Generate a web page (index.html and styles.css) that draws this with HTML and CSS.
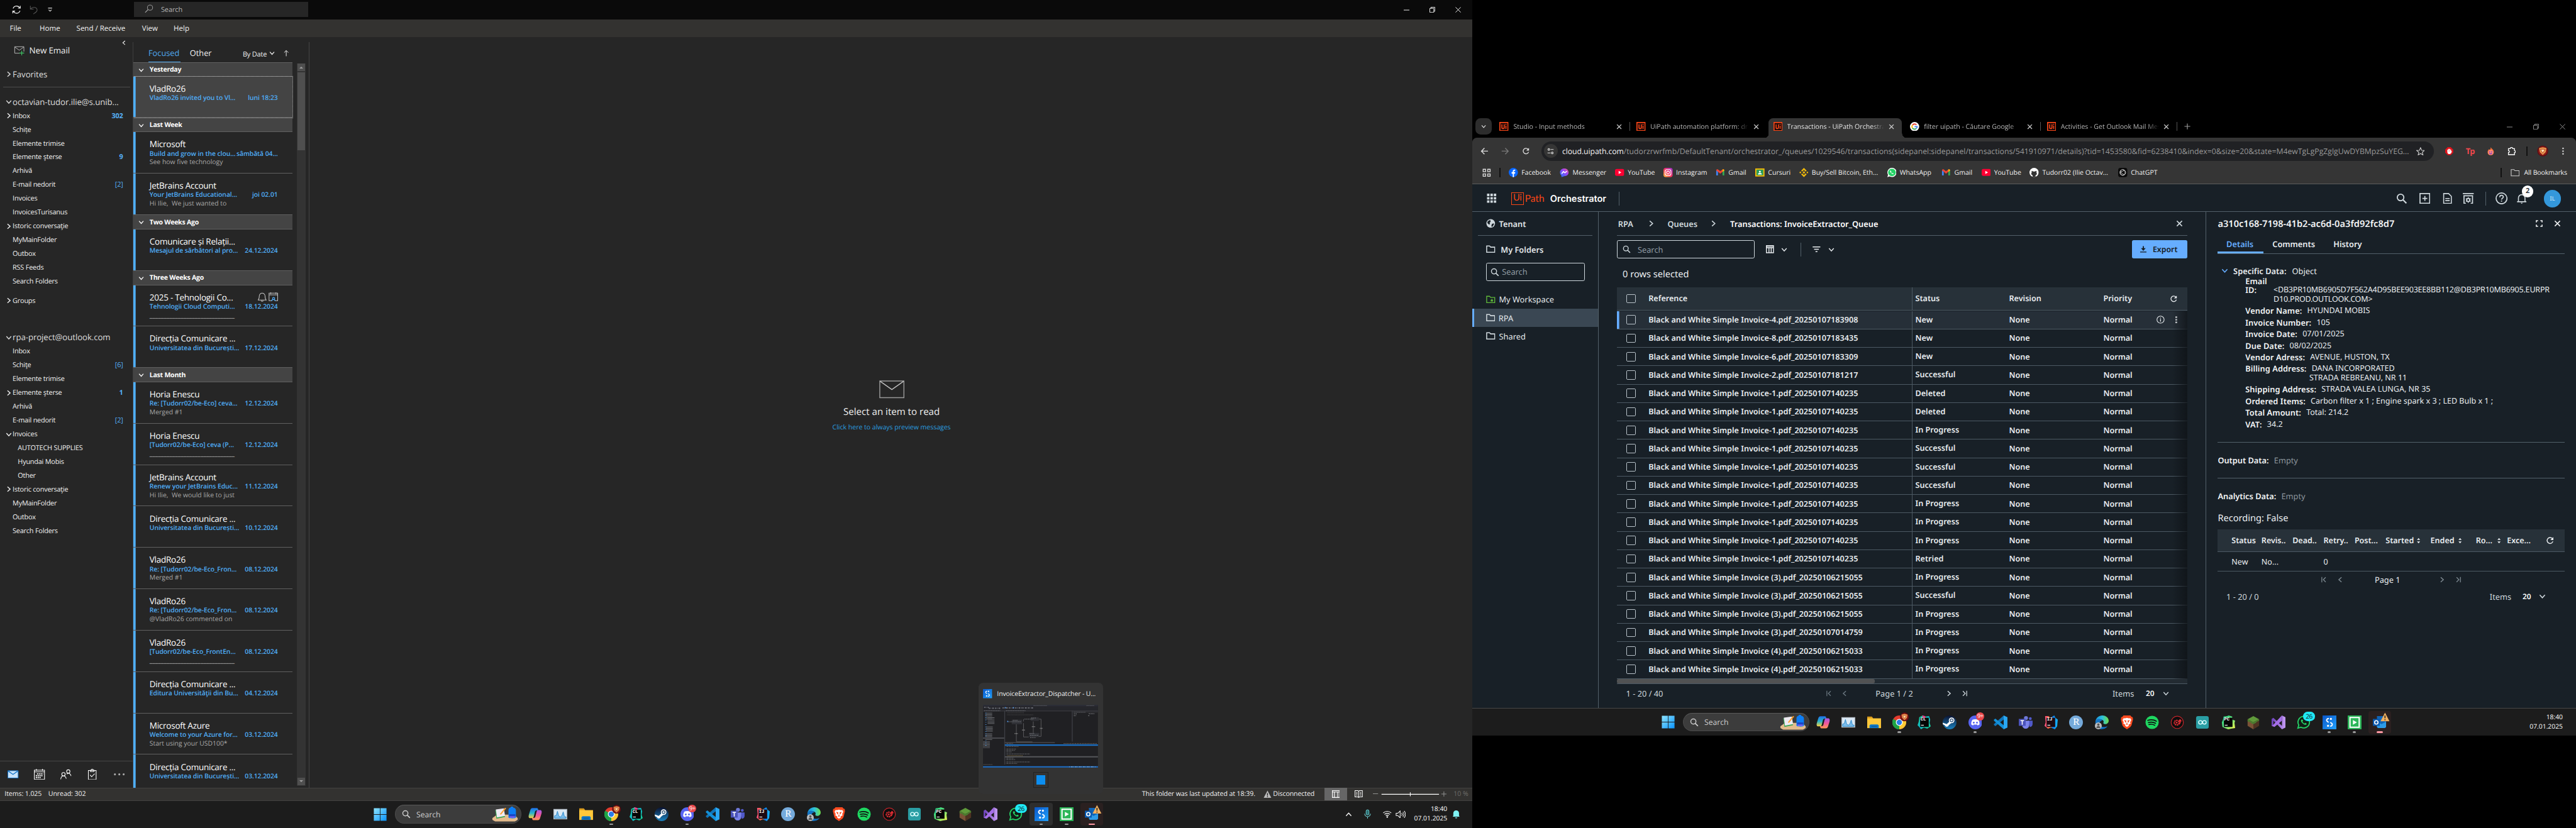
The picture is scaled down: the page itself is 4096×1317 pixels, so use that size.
FILE: index.html
```html
<!DOCTYPE html>
<html lang="en">
<head>
<meta charset="utf-8">
<title>Desktop</title>
<link rel="stylesheet" href="styles.css">
</head>
<body>
<svg class="sprite" aria-hidden="true">
  <defs>
    <linearGradient id="g-win" x1="0" y1="0" x2="1" y2="1"><stop offset="0" stop-color="#8ee4ff"/><stop offset="1" stop-color="#0a93fb"/></linearGradient>
    <linearGradient id="g-cop1" x1="0" y1="0" x2="0" y2="1"><stop offset="0" stop-color="#1f6fe8"/><stop offset=".5" stop-color="#2ab5c9"/><stop offset="1" stop-color="#ffd23c"/></linearGradient>
    <linearGradient id="g-cop2" x1="0" y1="0" x2="0" y2="1"><stop offset="0" stop-color="#a25be8"/><stop offset=".5" stop-color="#f0569a"/><stop offset="1" stop-color="#ff9a55"/></linearGradient>
    <linearGradient id="g-steam" x1="0" y1="0" x2="0" y2="1"><stop offset="0" stop-color="#0b1230"/><stop offset="1" stop-color="#1b83c0"/></linearGradient>
    <linearGradient id="g-ij" x1="0" y1="0" x2="1" y2="0"><stop offset="0" stop-color="#fe4c88"/><stop offset=".45" stop-color="#f97a2c"/><stop offset=".6" stop-color="#0a7cf0"/><stop offset="1" stop-color="#17b7f5"/></linearGradient>
    <linearGradient id="g-pc" x1="0" y1="0" x2="1" y2="1"><stop offset="0" stop-color="#1fd789"/><stop offset=".5" stop-color="#5fe07a"/><stop offset="1" stop-color="#fcf84a"/></linearGradient>
    <linearGradient id="g-cl" x1="0" y1="0" x2="1" y2="1"><stop offset="0" stop-color="#22d88f"/><stop offset=".5" stop-color="#0fb5c8"/><stop offset="1" stop-color="#18d68b"/></linearGradient>
    <linearGradient id="g-edge" x1="0" y1="0" x2="1" y2="0"><stop offset="0" stop-color="#1c8fd8"/><stop offset=".5" stop-color="#2cc0df"/><stop offset="1" stop-color="#6fe04a"/></linearGradient>
    <linearGradient id="g-ui" x1="0" y1="0" x2="1" y2="1"><stop offset="0" stop-color="#0a56c8"/><stop offset="1" stop-color="#22a3ff"/></linearGradient>
    <linearGradient id="g-ig" x1="0" y1="1" x2="1" y2="0"><stop offset="0" stop-color="#ffc53d"/><stop offset=".45" stop-color="#f9325b"/><stop offset="1" stop-color="#9b32d6"/></linearGradient>
    <linearGradient id="g-msg" x1="0" y1="1" x2="1" y2="0"><stop offset="0" stop-color="#1a77ff"/><stop offset=".6" stop-color="#9a45f5"/><stop offset="1" stop-color="#ff5f86"/></linearGradient>
    <linearGradient id="g-vs" x1="0" y1="0" x2="1" y2="0"><stop offset="0" stop-color="#6a3fb8"/><stop offset="1" stop-color="#c79cf5"/></linearGradient>
  </defs>
  <symbol id="i-chev-d" viewBox="0 0 12 12"><path d="M1.5 3.5 6 8.5l4.500-5" fill="none" stroke="currentColor" stroke-width="1.700"/></symbol>
  <symbol id="i-chev-r" viewBox="0 0 12 12"><path d="M3.500 1.500 8.500 6l-5 4.500" fill="none" stroke="currentColor" stroke-width="1.700"/></symbol>
  <symbol id="i-chev-l" viewBox="0 0 12 12"><path d="M8.500 1.500 3.500 6l5 4.500" fill="none" stroke="currentColor" stroke-width="1.700"/></symbol>
  <symbol id="i-first" viewBox="0 0 12 12"><path d="M9.500 1.500 5 6l4.500 4.500M2.200 1v10" fill="none" stroke="currentColor" stroke-width="1.500"/></symbol>
  <symbol id="i-last" viewBox="0 0 12 12"><path d="M2.500 1.500 7 6l-4.500 4.500M9.800 1v10" fill="none" stroke="currentColor" stroke-width="1.500"/></symbol>
  <symbol id="i-x" viewBox="0 0 12 12"><path d="M1.500 1.500l9 9M10.500 1.500l-9 9" fill="none" stroke="currentColor" stroke-width="1.700"/></symbol>
  <symbol id="i-search" viewBox="0 0 16 16"><circle cx="6.500" cy="6.500" r="4.800" fill="none" stroke="currentColor" stroke-width="1.700"/><path d="M10 10l5 5" stroke="currentColor" stroke-width="2"/></symbol>
  <symbol id="i-search-ol" viewBox="0 0 16 16"><circle cx="10" cy="6" r="4.800" fill="none" stroke="currentColor"/><path d="M6.500 9.500 1 15" stroke="currentColor" stroke-width="1.200"/></symbol>
  <symbol id="i-reload" viewBox="0 0 16 16"><path d="M13.200 9.500A5.500 5.500 0 1 1 12 4.100L13.500 6" fill="none" stroke="currentColor" stroke-width="1.700"/><path d="M14 1.500V7H8.500z" fill="currentColor"/></symbol>
  <symbol id="i-folder" viewBox="0 0 16 16"><path d="M1 2.500h5l2 2h7v9H1z" fill="none" stroke="currentColor" stroke-width="1.700"/></symbol>
  <symbol id="i-uip" viewBox="0 0 16 16"><path fill="#fa4616" d="M0 0h16v16H0z"/><path fill="#14080a" d="M1.800 1.800h12.400v12.400H1.800z"/><path d="M4.500 4v5.500a2 2 0 0 0 4 0V4" fill="none" stroke="#fa4616" stroke-width="1.700"/><path d="M11.500 6.500V12M11.500 3.500v1.700" stroke="#fa4616" stroke-width="1.700"/></symbol>
  <symbol id="i-yt" viewBox="0 0 16 16"><rect y="2" width="16" height="12" rx="3" fill="#ff0033"/><path d="M6.300 5.300v5.400L11 8z" fill="#fff"/></symbol>
  <symbol id="i-gmail" viewBox="0 0 16 16"><path fill="#4285f4" d="M1 13V4l3 2.300V13z"/><path fill="#34a853" d="M15 13V4l-3 2.300V13z"/><path fill="#ea4335" d="M1 4.500C1 2.500 3 2 4.300 3L8 5.800 11.700 3c1.300-1 3.300-.5 3.300 1.500L8 10z"/><path fill="#fbbc04" d="M12 3v4l3-2.300c0-2-2-2.700-3-1.700z"/></symbol>
  <symbol id="i-wa" viewBox="0 0 24 24"><path d="M2 22l1.500-5.300A10 10 0 1 1 7.400 20.500z" fill="#111d16" stroke="#25d366" stroke-width="2"/><path d="M8 7c-1.500 1.500-.5 4 1.800 6.300S15 17 16.500 15.800c.8-.7.8-1.600.3-1.900l-2-1-1.300 1.300c-1.500-.5-3.200-2.200-3.700-3.700L11 9.200 10 7z" fill="#25d366"/></symbol>
  <symbol id="i-sort" viewBox="0 0 8 14"><path d="M1 5.500 4 2l3 3.500zM1 8.500 4 12l3-3.500z" fill="currentColor"/></symbol>
  <symbol id="i-github" viewBox="0 0 16 16"><circle cx="8" cy="8" r="8" fill="#fff"/><path d="M5.500 16v-3.200C2.500 12.500 2.800 9 4 8c-.5-1-.3-2.300 0-2.700.8 0 1.500.4 2.200.9h3.600c.7-.5 1.400-.9 2.200-.9.300.4.500 1.700 0 2.700 1.200 1 1.500 4.500-1.500 4.800V16z" fill="#353535"/></symbol>

  <symbol id="t-win" viewBox="0 0 24 24"><path d="M.5.500h11v11H.5zM12.500.5h11v11h-11zM.5 12.500h11v11H.5zM12.500 12.500h11v11h-11z" fill="url(#g-win)"/></symbol>
  <symbol id="t-desk" viewBox="0 0 46 26"><path d="M1 20l8-6h30l6 6v3l-5 3H6l-5-3z" fill="#e3bb8c"/><path d="M6 6l15-2 2 14L8 21z" fill="#3aa655"/><path d="M7 5l14-2 2 13L9 19z" fill="#eeeaf2"/><path d="M14 13 23 2l2 1-9 11z" fill="#ffa02e"/><path d="M29 7c0-4 2-5 3-5s0-2 3-2 2 2 3 2 4 1 4 5v12c0 2-13 2-13 0z" fill="#0c7df5"/><path d="M30 13h11v4H30z" fill="#1a47c8"/><path d="M31 18h9" stroke="#b14ff2" stroke-width="1.500"/></symbol>
  <symbol id="t-copilot" viewBox="0 0 24 24"><path d="M7.500 1.500H15c2 0 2 2 2.500 4h-3c-2 0-2.500 1-3 3l-2 8c-.5 2-1.500 2.500-3.500 2.500H3.500C.5 19 .2 16 1 13l2.500-8c.6-2 1.500-3.500 4-3.500z" fill="url(#g-cop1)"/><path d="M16.500 22.500H9c-2 0-2-2-2.500-4h3c2 0 2.500-1 3-3l2-8c.5-2 1.500-2.500 3.500-2.500h2.500c3 0 3.300 3 2.500 6l-2.500 8c-.6 2-1.500 3.500-4 3.500z" fill="url(#g-cop2)"/></symbol>
  <symbol id="t-mon" viewBox="0 0 24 24"><path d="M0 3h24v18H0z" fill="#b7bfc7"/><path d="M1.500 4.500h21v15h-21z" fill="#dbe9f5"/><path d="M2 19v-4l3-1 2-7 2 8 3 2 3-3 2-6 2 8 3 1v2z" fill="#7cbdec" stroke="#2484c8"/></symbol>
  <symbol id="t-files" viewBox="0 0 24 24"><path d="M0 2h8l2 2.500V8H0z" fill="#d99a1c"/><path d="M0 5h24v17H0z" fill="#ffc83a"/><path d="M4 22v-4c0-1.500 1-2.500 2.500-2.500h11c1.500 0 2.500 1 2.500 2.500v4z" fill="#0f78c8"/><path d="M7 19h10" stroke="#0a5a9c" stroke-width="1.500"/></symbol>
  <symbol id="t-chrome" viewBox="0 0 24 24"><circle cx="12" cy="12" r="12" fill="#e33b2e"/><path d="M12 12 1.600 6A12 12 0 0 0 12 24z" fill="#1ea446"/><path d="M12 12 12 24A12 12 0 0 0 22.500 6.200L12 6.500z" fill="#fcc934"/><path d="M1.600 6 7 15l5 9A12 12 0 0 1 1.600 6z" fill="#1ea446"/><circle cx="12" cy="12" r="6" fill="#fff"/><circle cx="12" cy="12" r="4.600" fill="#2b7de9"/></symbol>
  <symbol id="t-shield" viewBox="0 0 20 20"><circle cx="10" cy="10" r="9.500" fill="#5c0d12"/><circle cx="10" cy="10" r="8" fill="#8c1a18"/><path d="M3.500 5 10 3.500 16.500 5 15 12l-5 5-5-5z" fill="#e89a50"/><path d="M6 7h8l-4 7z" fill="#ffe3b0" stroke="#b33a20"/></symbol>
  <symbol id="t-clion" viewBox="0 0 24 24"><path d="M3 3l6-3 4 2 7-1 2 6-1 6 2 6-6 4-6-2-5 3-3-4-3-3 2-6z" fill="url(#g-cl)"/><path d="M8 0l5 1 2 3-5 2z" fill="#f53b8b"/><path d="M4.500 4h15v16h-15z" fill="#050505"/><path d="M6 17h5" stroke="#ddd" stroke-width="1.500"/></symbol>
  <symbol id="t-steam" viewBox="0 0 24 24"><circle cx="12" cy="12" r="12" fill="url(#g-steam)"/><circle cx="15.500" cy="8.500" r="4" fill="none" stroke="#fff" stroke-width="1.800"/><circle cx="15.500" cy="8.500" r="2" fill="#dfe8f0"/><path d="M0 12.500l7 2.500 5-4.500 3 2.500-4.500 4a3.500 3.500 0 0 1-6.800 0L.5 15.500z" fill="#fff"/></symbol>
  <symbol id="t-discord" viewBox="0 0 24 24"><circle cx="12" cy="12" r="12" fill="#5865f2"/><path d="M7 7.500c3-1.300 7-1.300 10 0 1.700 2.500 2.400 5 2.200 8-1 .9-2.300 1.400-3.500 1.600l-.9-1.500c-2 .5-3.600.5-5.600 0l-.9 1.500c-1.200-.2-2.500-.7-3.500-1.600-.2-3 .5-5.500 2.200-8z" fill="#fff"/><circle cx="9.200" cy="12.500" r="1.600" fill="#5865f2"/><circle cx="14.800" cy="12.500" r="1.600" fill="#5865f2"/></symbol>
  <symbol id="t-code" viewBox="0 0 24 24"><path d="M17.500 0 24 3v18l-6.500 3z" fill="#2aa7f2"/><path d="M17.500 0v7L3 18.500.5 16.500V15z" fill="#0f75ba"/><path d="M17.500 24v-7L3 5.500.5 7.500V9z" fill="#1390d8"/></symbol>
  <symbol id="t-teams" viewBox="0 0 24 24"><circle cx="12.500" cy="4.500" r="3.500" fill="#6e78d8"/><circle cx="20" cy="5.500" r="2.500" fill="#5059c9"/><path d="M16 9h8v6c0 3-2 5-5 5z" fill="#5059c9"/><path d="M6 9h12v8c0 4-3 6-6 6s-6-2-6-6z" fill="#7b83eb"/><path d="M0 6h12v12H0z" fill="#4b53bc"/><path d="M3 9h6M6 9v7" stroke="#fff" stroke-width="1.700"/></symbol>
  <symbol id="t-idea" viewBox="0 0 24 24"><path d="M2 1l6 0 3 3 7-4 2 4 4 3-1 12-4 5-7-3-5 2-6-5 2-6z" fill="url(#g-ij)"/><path d="M4.500 4h15v16h-15z" fill="#1d0a12"/><path d="M6 17h5" stroke="#ddd" stroke-width="1.500"/></symbol>
  <symbol id="t-r" viewBox="0 0 24 24"><circle cx="12" cy="12" r="12" fill="#75aadb"/></symbol>
  <symbol id="t-edge" viewBox="0 0 24 24"><path d="M1 10C2 4 7 0 13 0c7 0 11 5 11 9s-3 6-6 6c-2 0-4-1-3-3s-1-5-5-5c-5 0-8 3-8 7z" fill="url(#g-edge)"/><path d="M1 10c3-5 9-5 12-1-3 0-5 2-5 5 0 5 6 8 14 5-3 4-7 5-11 5C4 23 0 17 1 10z" fill="#1273c4"/><circle cx="6" cy="18" r="6" fill="#b9bcc0"/><circle cx="6" cy="16" r="2" fill="#555"/><path d="M2.500 22c0-5 7-5 7 0z" fill="#555"/></symbol>
  <symbol id="t-brave" viewBox="0 0 24 24"><path d="M6 0h12l2 2.500 2 .5.500 4L20 17l-2 3-6 4-6-4-2-3L1.500 7 2 3l2-.5z" fill="#fb4b20"/><path d="M12 4l3 1h3l1.500 3-2 4 1 2-4 2 1 1.500L12 20l-3.500-2.500 1-1.500-4-2 1-2-2-4L6 5h3z" fill="#fff"/><path d="M7 8l4 1-1 4zM17 8l-4 1 1 4zM12 12l1.500 4h-3z" fill="#fb4b20"/></symbol>
  <symbol id="t-spotify" viewBox="0 0 24 24"><circle cx="12" cy="12" r="11.500" fill="#1ed760"/><path d="M4.500 8.500c5-1.500 11-1 15 1.500M5.500 12.300c4-1.200 9-.8 12.500 1.300M6.500 15.800c3.500-.9 7-.5 10 1.200" fill="none" stroke="#101010" stroke-width="1.900" stroke-linecap="round"/></symbol>
  <symbol id="t-red" viewBox="0 0 24 24"><circle cx="12" cy="12" r="10.700" fill="#0d0d0d" stroke="#c2252b" stroke-width="1.300"/><circle cx="11" cy="12.500" r="4" fill="none" stroke="#e12d33" stroke-width="2.500" stroke-dasharray="2.500 1"/><circle cx="11" cy="12.500" r="1.500" fill="#e12d33"/><path d="M14 9l3-3 3 4-2 .5c0 3-1 5-4 6 2-3 2-4 1.500-6z" fill="#e12d33"/></symbol>
  <symbol id="t-ard" viewBox="0 0 24 24"><rect x="1" y="1" width="22" height="22" rx="3.500" fill="#2a9ea4"/><circle cx="8.500" cy="12" r="3.100" fill="none" stroke="#dff" stroke-width="1.500"/><circle cx="15.500" cy="12" r="3.100" fill="none" stroke="#dff" stroke-width="1.500"/></symbol>
  <symbol id="t-pycharm" viewBox="0 0 24 24"><path d="M4 2l6-1 3-1 6 2 0 5 5 2-1 4 1 9-7 1-5 1-6-2-4-2-1-8 2-5z" fill="url(#g-pc)"/><path d="M4.500 4h15v16h-15z" fill="#050505"/><path d="M6 17h5" stroke="#ddd" stroke-width="1.500"/></symbol>
  <symbol id="t-mine" viewBox="0 0 24 24"><path d="M12 1l10 5.500-10 5.500L2 6.500z" fill="#5f9a3a"/><path d="M2 6.500 12 12v12L2 18z" fill="#7a5236"/><path d="M22 6.500 12 12v12l10-6z" fill="#4e3322"/><path d="M2 6.500 12 12v3l-3-1-2-2-3-1-2-1zM22 6.500 12 12v3l4-2 2-2 4-2z" fill="#4b7c2f"/></symbol>
  <symbol id="t-vs" viewBox="0 0 24 24"><path d="M0 6l3-2 15 14V0l6 3v18l-6 3L3 9v7l-3 2z" fill="url(#g-vs)"/><path d="M18 0v9L5 20l-3-1-2-1 3-2L17.500.3z" fill="#a56ee8"/></symbol>
  <symbol id="t-uipath" viewBox="0 0 24 24"><path d="M0 0h24v24H0z" fill="url(#g-ui)"/><path d="M11 5.500C7 5 6 9 8.500 10.500l2 1.500M13 18.500c4 .5 5-3.500 2.500-5l-2-1.500" fill="none" stroke="#fff" stroke-width="2"/><circle cx="14.500" cy="6" r="1.800" fill="#fff"/><circle cx="9.500" cy="18" r="1.800" fill="#fff"/></symbol>
  <symbol id="t-green" viewBox="0 0 24 24"><path d="M0 0h24v24H0z" fill="#2bb658"/><path d="M4 3.500h16v17H4z" fill="none" stroke="#fff" stroke-width="2.200"/><path d="M9 8l7 4-7 4z" fill="#fff"/></symbol>
  <symbol id="t-outlook" viewBox="0 0 24 24"><path d="M7 1h12l4 5v14l-3 2H8z" fill="#1065b8"/><path d="M7 11l8 4 8-4v9l-2 2H9l-2-2z" fill="#2c9be8"/><path d="M0 6h12v12H0z" fill="#0b5ab0"/><circle cx="6" cy="12" r="3" fill="none" stroke="#fff" stroke-width="1.800"/></symbol>
  <symbol id="i-warn" viewBox="0 0 16 16"><path d="M8 .5 15.800 15.500H.2z" fill="currentColor"/><path d="M8 5.500v5M8 12v1.800" stroke="#222" stroke-width="1.700"/></symbol>
</svg>

<div class="desktop">
  <section class="monitor left">
    <header class="ol-title">
      <svg class="sync" viewBox="0 0 16 16"><path d="M2 6a6.300 6.300 0 0 1 11.500-1M14 10a6.300 6.300 0 0 1-11.500 1M14.500 1.500V5.500H10.500M1.500 14.500V10.500H5.500" fill="none" stroke="#f2f2f2" stroke-width="1.300"/></svg>
      <svg class="undo" viewBox="0 0 16 16"><path d="M1.500 1v6h6M2 7c3-5 12-4 12 2 0 3-4 5-7 7" fill="none" stroke="#555" stroke-width="1.300"/></svg>
      <svg class="qat" viewBox="0 0 8 8"><path d="M.5 1h7M1.500 4 4 6.300 6.500 4" fill="none" stroke="#ddd" stroke-width="1.200"/></svg>
      <div class="ol-search"><svg><use href="#i-search-ol"/></svg><span>Search</span></div>
      <div class="win-ctl">
        <svg viewBox="0 0 10 10"><path d="M0 5.500h10" stroke="#fff"/></svg>
        <svg viewBox="0 0 10 10"><path d="M.5 2.500h7v7h-7zM2.500 2.500v-2h7v7h-2" fill="none" stroke="#fff"/></svg>
        <svg viewBox="0 0 10 10"><path d="M.5.500l9 9M9.500.5l-9 9" stroke="#fff"/></svg>
      </div>
    </header>
    <nav class="ol-tabs"><span>File</span><span>Home</span><span>Send / Receive</span><span>View</span><span>Help</span></nav>
    <div class="ol-body">
      <aside class="folders">
        <div class="new-mail">
          <svg viewBox="0 0 20 18"><path d="M11 13.500H1.500v-12h17v9M1.500 2l8.500 6 8.500-6" fill="none" stroke="#bbb" stroke-width="1.100"/><path d="M14.500 9v8.500M10 13.200h9" stroke="#3fc565" stroke-width="1.300"/></svg>
          <span>New Email</span>
          <svg class="collapse"><use href="#i-chev-l"/></svg>
        </div>
        <div class="row acct fav"><svg><use href="#i-chev-r"/></svg><span>Favorites</span></div>
        <div class="rule"></div>
        <div class="row acct"><svg><use href="#i-chev-d"/></svg><span>octavian-tudor.ilie@s.unib...</span></div>
        <div class="row"><svg><use href="#i-chev-r"/></svg><span>Inbox</span><b>302</b></div>
        <div class="row"><i></i><span>Schițe</span></div>
        <div class="row"><i></i><span>Elemente trimise</span></div>
        <div class="row"><i></i><span>Elemente şterse</span><b>9</b></div>
        <div class="row"><i></i><span>Arhivă</span></div>
        <div class="row"><i></i><span>E-mail nedorit</span><em>[2]</em></div>
        <div class="row"><i></i><span>Invoices</span></div>
        <div class="row"><i></i><span>InvoicesTurisanus</span></div>
        <div class="row"><svg><use href="#i-chev-r"/></svg><span>Istoric conversaţie</span></div>
        <div class="row"><i></i><span>MyMainFolder</span></div>
        <div class="row"><i></i><span>Outbox</span></div>
        <div class="row"><i></i><span>RSS Feeds</span></div>
        <div class="row"><i></i><span>Search Folders</span></div>
        <div class="row groups"><svg><use href="#i-chev-r"/></svg><span>Groups</span></div>
        <div class="row acct second"><svg><use href="#i-chev-d"/></svg><span>rpa-project@outlook.com</span></div>
        <div class="row"><i></i><span>Inbox</span></div>
        <div class="row"><i></i><span>Schiţe</span><em>[6]</em></div>
        <div class="row"><i></i><span>Elemente trimise</span></div>
        <div class="row"><svg><use href="#i-chev-r"/></svg><span>Elemente şterse</span><b>1</b></div>
        <div class="row"><i></i><span>Arhivă</span></div>
        <div class="row"><i></i><span>E-mail nedorit</span><em>[2]</em></div>
        <div class="row"><svg><use href="#i-chev-d"/></svg><span>Invoices</span></div>
        <div class="row sub"><i></i><span>AUTOTECH SUPPLIES</span></div>
        <div class="row sub"><i></i><span>Hyundai Mobis</span></div>
        <div class="row sub"><i></i><span>Other</span></div>
        <div class="row"><svg><use href="#i-chev-r"/></svg><span>Istoric conversaţie</span></div>
        <div class="row"><i></i><span>MyMainFolder</span></div>
        <div class="row"><i></i><span>Outbox</span></div>
        <div class="row"><i></i><span>Search Folders</span></div>
        <div class="modules">
          <svg viewBox="0 0 18 18"><path d="M.5 3h17v12H.5z" fill="#c9e3fa" stroke="#1273c8"/><path d="M1 3.500 9 9l8-5.500" fill="none" stroke="#1273c8" stroke-width="1.300"/></svg>
          <svg viewBox="0 0 18 18"><path d="M.6 2h16.800v15.400H.6zM.6 5h16.800M4 0v3M14 0v3" fill="none" stroke="#fff" stroke-width="1.100"/><path d="M5 8.200h10M3 11.200h12M3 14.200h8" stroke="#fff" stroke-width="2" stroke-dasharray="2 1"/></svg>
          <svg viewBox="0 0 20 18"><path d="M.7 18c.3-4 1.800-6 5-6s4.500 2 5 5M5.700 5.700a3 3 0 1 1 0 6.100 3 3 0 0 1 0-6.100zM14.500.6a3 3 0 1 1 0 6.100 3 3 0 0 1 0-6.100zM11.500 8.500c4-3 7.500-.5 8 3.500" fill="none" stroke="#fff" stroke-width="1.200"/></svg>
          <svg viewBox="0 0 18 18"><path d="M2.600 2.600h12.800v15H2.600zM6 4.500V2h1.500a1.500 1.500 0 0 1 3 0H12v2.500zM5.500 10l2.500 3 5-5" fill="none" stroke="#fff" stroke-width="1.100"/></svg>
          <svg viewBox="0 0 20 18"><circle cx="2" cy="9" r="1.800" fill="#aaa"/><circle cx="10" cy="9" r="1.800" fill="#aaa"/><circle cx="18" cy="9" r="1.800" fill="#aaa"/></svg>
        </div>
      </aside>
      <div class="list-pane">
        <div class="list-head"><span class="on">Focused</span><span>Other</span><small>By Date</small><svg><use href="#i-chev-d"/></svg><svg class="arrow" viewBox="0 0 10 12"><path d="M5 12V1M1 5l4-4 4 4" fill="none" stroke="#eee" stroke-width="1.200"/></svg></div>
        <div class="list-wrap">
          <div class="mails">
            <h4 class="first"><svg><use href="#i-chev-d"/></svg>Yesterday</h4>
            <article class="sel"><h5>VladRo26</h5><div><span>VladRo26 invited you to Vl...</span><time>luni 18:23</time></div></article>
            <h4><svg><use href="#i-chev-d"/></svg>Last Week</h4>
            <article><h5>Microsoft</h5><div><span>Build and grow in the clou...</span><time>sâmbătă 04...</time></div><p>See how five technology</p></article>
            <article><h5>JetBrains Account</h5><div><span>Your JetBrains Educational...</span><time>joi 02.01</time></div><p>Hi Ilie,&nbsp; We just wanted to</p></article>
            <h4><svg><use href="#i-chev-d"/></svg>Two Weeks Ago</h4>
            <article><h5>Comunicare și Relații...</h5><div><span>Mesajul de sărbători al pro...</span><time>24.12.2024</time></div></article>
            <h4><svg><use href="#i-chev-d"/></svg>Three Weeks Ago</h4>
            <article><h5>2025 - Tehnologii Co...<svg class="flags" viewBox="0 0 36 18"><path d="M.5 14.500c2-2 2-4 2-7a5 5 0 0 1 10 0c0 3 0 5 2 7zM5.500 15.500c1 1.500 3 1.500 4 0M19.500 2.500h15v13h-15zM19.500 5.500h15M22.500 1v3M31.500 1v3" fill="none" stroke="#c4c4c4" stroke-width="1.100"/><path d="M24 16.500c0-4 6-4 6 0M27 10a1.800 1.800 0 1 1 0 3.500 1.800 1.800 0 0 1 0-3.500z" fill="#262626" stroke="#4fb0ff" stroke-width="1.200"/></svg></h5><div><span>Tehnologii Cloud Computi...</span><time>18.12.2024</time></div><p class="us">______________________________</p></article>
            <article><h5>Direcția Comunicare ...</h5><div><span>Universitatea din București...</span><time>17.12.2024</time></div></article>
            <h4><svg><use href="#i-chev-d"/></svg>Last Month</h4>
            <article><h5>Horia Enescu</h5><div><span>Re: [Tudorr02/be-Eco] ceva...</span><time>12.12.2024</time></div><p>Merged #1</p></article>
            <article><h5>Horia Enescu</h5><div><span>[Tudorr02/be-Eco] ceva (P...</span><time>12.12.2024</time></div><p class="us">______________________________</p></article>
            <article><h5>JetBrains Account</h5><div><span>Renew your JetBrains Educ...</span><time>11.12.2024</time></div><p>Hi Ilie,&nbsp; We would like to just</p></article>
            <article><h5>Direcția Comunicare ...</h5><div><span>Universitatea din București...</span><time>10.12.2024</time></div></article>
            <article><h5>VladRo26</h5><div><span>Re: [Tudorr02/be-Eco_Fron...</span><time>08.12.2024</time></div><p>Merged #1</p></article>
            <article><h5>VladRo26</h5><div><span>Re: [Tudorr02/be-Eco_Fron...</span><time>08.12.2024</time></div><p>@VladRo26 commented on</p></article>
            <article><h5>VladRo26</h5><div><span>[Tudorr02/be-Eco_FrontEn...</span><time>08.12.2024</time></div><p class="us">______________________________</p></article>
            <article><h5>Direcția Comunicare ...</h5><div><span>Editura Universităţii din Bu...</span><time>04.12.2024</time></div></article>
            <article><h5>Microsoft Azure</h5><div><span>Welcome to your Azure for...</span><time>03.12.2024</time></div><p>Start using your USD100*</p></article>
            <article class="cut"><h5>Direcția Comunicare ...</h5><div><span>Universitatea din București...</span><time>03.12.2024</time></div></article>
          </div>
          <div class="scroll"><i class="up"></i><b></b><i class="down"></i></div>
        </div>
      </div>
      <main class="reading">
        <svg viewBox="0 0 44 31"><path d="M1 1h42v29H1z" fill="none" stroke="#999" stroke-width="1.600"/><path d="M1.500 1.500 22 16 42.500 1.500" fill="none" stroke="#c4c4c4" stroke-width="1.400"/></svg>
        <strong>Select an item to read</strong>
        <a>Click here to always preview messages</a>
      </main>
    </div>
    <footer class="ol-status">
      <span class="st-items">Items: 1.025</span><span>Unread: 302</span>
      <span class="st-upd">This folder was last updated at 18:39.</span>
      <svg class="st-warn"><use href="#i-warn"/></svg><span class="st-disc">Disconnected</span>
      <span class="view on"><svg viewBox="0 0 14 13"><path d="M.6.600h12.800v11.800H.6zM.6 3h12.800M4 3v9M10 3v9" fill="none" stroke="#fff" stroke-width="1.200"/></svg></span>
      <span class="view"><svg viewBox="0 0 14 13"><path d="M7 1.500v11M.6.600h5L7 1.700 8.400.6h5v11H8.400L7 12.500 5.600 11.600h-5zM2.500 3.500h2.500M2.500 6h2.500M2.500 8.500h2.500M9 3.500h2.500M9 6h2.500M9 8.500h2.500" fill="none" stroke="#fff" stroke-width="1.100"/></svg></span>
      <svg class="zoomer" viewBox="0 0 130 14"><path d="M0 6h9M119 6.500h9M123.500 2v9" stroke="#999"/><path d="M15 7h100M65 3.500v7" stroke="#fff" stroke-width="1.200"/></svg>
      <span class="pct">10 %</span>
    </footer>
    <footer class="taskbar">
      <svg class="start"><use href="#t-win"/></svg>
      <div class="pill"><svg><use href="#i-search"/></svg><span>Search</span><svg class="desk"><use href="#t-desk"/></svg></div>
      <div class="apps">
        <span><svg><use href="#t-copilot"/></svg></span><span><svg><use href="#t-mon"/></svg></span><span><svg><use href="#t-files"/></svg></span>
        <span class="run"><svg><use href="#t-chrome"/></svg><svg class="badge-svg"><use href="#t-shield"/></svg></span>
        <span><svg><use href="#t-clion"/></svg><em>CL</em></span><span><svg><use href="#t-steam"/></svg></span>
        <span class="run"><svg><use href="#t-discord"/></svg><small class="red">9+</small></span>
        <span><svg><use href="#t-code"/></svg></span><span><svg><use href="#t-teams"/></svg></span><span><svg><use href="#t-idea"/></svg><em>IJ</em></span><span><svg><use href="#t-r"/></svg><em class="serif">R</em></span><span><svg><use href="#t-edge"/></svg></span><span><svg><use href="#t-brave"/></svg></span><span><svg><use href="#t-spotify"/></svg></span><span><svg><use href="#t-red"/></svg></span><span><svg><use href="#t-ard"/></svg></span><span><svg><use href="#t-pycharm"/></svg><em>PC</em></span><span><svg><use href="#t-mine"/></svg></span><span><svg><use href="#t-vs"/></svg></span>
        <span><svg><use href="#i-wa"/></svg><small class="cyan">26</small></span>
        <span class="run hover"><svg><use href="#t-uipath"/></svg></span>
        <span class="run"><svg><use href="#t-green"/></svg></span>
        <span class="run alert"><svg><use href="#t-outlook"/></svg><svg class="badge-svg tri"><use href="#i-warn"/></svg></span>
      </div>
      <div class="tray">
        <svg viewBox="0 0 12 12"><path d="M1.500 8.500 6 3.500l4.500 5" fill="none" stroke="#fff" stroke-width="1.400"/></svg>
        <svg viewBox="0 0 12 16" class="mic"><rect x="3.500" y=".6" width="5" height="9" rx="2.500" fill="#2c6f73" stroke="#6fd3d6"/><path d="M1 7.500a5 5 0 0 0 10 0M6 12.500V16" fill="none" stroke="#6fd3d6" stroke-width="1.100"/></svg>
        <svg viewBox="0 0 16 13" class="wifi"><path d="M1 4.500a10 10 0 0 1 14 0M3.200 7a7 7 0 0 1 9.600 0M5.500 9.300a4 4 0 0 1 5 0" fill="none" stroke="#fff" stroke-width="1.200"/><circle cx="8" cy="11.500" r="1.300" fill="#fff"/></svg>
        <svg viewBox="0 0 18 14" class="spk"><path d="M1 5h3l4-4v12L4 9H1zM10.500 4.500c1.300 1.500 1.300 3.500 0 5M12.700 2.700c2.300 2.500 2.300 6 0 8.500M15 1c3 3.500 3 8.500 0 12" fill="none" stroke="#fff" stroke-width="1.100"/></svg>
      </div>
      <div class="clock"><span>18:40</span><span>07.01.2025</span></div>
      <svg class="bell" viewBox="0 0 14 16"><path d="M1 12c1.500-2 1-3 1-6a5 5 0 0 1 10 0c0 3-.5 4 1 6zM5 13.500h4c0 2-4 2-4 0z" fill="#7ff3f5"/></svg>
    </footer>

    <div class="preview">
      <div class="pv-title"><svg><use href="#t-uipath"/></svg><span>InvoiceExtractor_Dispatcher - U...</span></div>
      <svg class="thumb" viewBox="0 0 200 109">
        <path d="M0 0h200v109H0z" fill="#202023"/><path d="M0 0h200v3H0z" fill="#2b2d36"/><path d="M0 3h200v6H0z" fill="#25262b"/>
        <path d="M2 4.500h8M10 6h20M34 5.500h55" stroke="#8a8c95" stroke-width="2" stroke-dasharray="2 1 1 2 3 2" opacity=".7"/><path d="M38 5h2M52 5h2" stroke="#4a90e0" stroke-width="2"/>
        <path d="M88 1.500h24M180 1.500h14" stroke="#777" stroke-dasharray="1 1"/>
        <path d="M0 9.500h200v2H0z" fill="#34353b"/><path d="M37 10h1.500v94H37zM154.500 10h1.500v54h-1.500z" fill="#3d3e44"/>
        <path d="M40 10.500h34M2 10.500h28" stroke="#777a80" stroke-dasharray="2 1"/>
        <path d="M10 14v12M14 22v11M11 38v10M10 50v12M6 64v12" stroke="#6d6f74" stroke-width="12" stroke-dasharray="1 1.500"/>
        <path d="M5 14v60" stroke="#3f7fc0" stroke-width="2" stroke-dasharray="1 3"/>
        <path d="M0 57h37v2H0z" fill="#48494e"/>
        <path d="M42 14h30M42 17.500h46" stroke="#555" stroke-dasharray="1 1"/>
        <path d="M50 26h18v8H50zM83 22h14v6H83zM80 49h18v7H80z" fill="#303136"/><path d="M52 27h8M43 29.500h23M84 23h9M72 25h16M81 50h9M82 53h14M82 57h10" stroke="#7d7f84" stroke-dasharray="2 1"/><path d="M42 29h2" stroke="#4a90e0" stroke-width="2"/>
        <path d="M58 34v30M70.500 32v24h9M70.500 25v4M87.500 29v20M101 25h-4M101 25v30h-4" fill="none" stroke="#77777b" stroke-width=".7"/>
        <path d="M55 50h6M68 44h5M85 38h6M99 41h5" stroke="#888" stroke-width="1.600" stroke-dasharray="1 .5"/>
        <path d="M38 65h87v1.500H38z" fill="#4c4d52"/><path d="M58 64h28v1H58z" fill="#666"/>
        <path d="M158 13h20M158 16h6M184 15.500h10M158 19h4M183 19h2" stroke="#8d8f94" stroke-dasharray="2 1"/><path d="M156 11h44v3h-44z" fill="#35363b" opacity=".5"/>
        <path d="M38 69h162v2.500H38z" fill="#1a6fc4"/><path d="M140 67.500h58M40 67.500h12M40 72.500h22M40 77h18M40 79.500h16M40 82h10M40 85.500h42M40 93h14M40 95.500h16M40 99.500h42M40 102h20" stroke="#74767b" stroke-dasharray="1 .7 2 .8"/>
        <path d="M38 89.500h162v2H38z" fill="#55565a"/><path d="M42 88.500h28" stroke="#a58d50" stroke-dasharray="1 1"/>
        <path d="M0 107h200v2H0z" fill="#1f6fc8"/><path d="M1 104h16" stroke="#777" stroke-dasharray="1 1"/><path d="M150 108h46" stroke="#9cc4ee" stroke-dasharray="1 2 3 1"/>
      </svg>
      <i class="pv-box"></i>
    </div>
  </section>

  <section class="monitor right">
    <div class="strip">
      <span class="tabsearch"><svg><use href="#i-chev-d"/></svg></span>
      <div class="tab"><svg><use href="#i-uip"/></svg><span>Studio - Input methods</span><svg class="x"><use href="#i-x"/></svg><i></i></div>
      <div class="tab"><svg><use href="#i-uip"/></svg><span>UiPath automation platform: drive</span><svg class="x"><use href="#i-x"/></svg></div>
      <div class="tab active"><svg><use href="#i-uip"/></svg><span>Transactions - UiPath Orchestrator</span><svg class="x"><use href="#i-x"/></svg></div>
      <div class="tab"><svg viewBox="0 0 16 16"><circle cx="8" cy="8" r="8" fill="#fff"/><path d="M4.300 5.400A4.500 4.500 0 0 1 11.300 5" fill="none" stroke="#ea4335" stroke-width="2"/><path d="M4.300 10.600a4.700 4.700 0 0 1 0-5.200" fill="none" stroke="#fbbc05" stroke-width="2"/><path d="M11 11.400a4.500 4.500 0 0 1-6.700-.8" fill="none" stroke="#34a853" stroke-width="2"/><path d="M8 8h4.500a4.500 4.500 0 0 1-1.500 3.400" fill="none" stroke="#4285f4" stroke-width="2"/></svg><span>filter uipath - Căutare Google</span><svg class="x"><use href="#i-x"/></svg><i></i></div>
      <div class="tab"><svg><use href="#i-uip"/></svg><span>Activities - Get Outlook Mail Messages</span><svg class="x"><use href="#i-x"/></svg><i></i></div>
      <svg class="plus" viewBox="0 0 12 12"><path d="M6 .5v11M.5 6h11" stroke="#999" stroke-width="1.400"/></svg>
      <div class="win-ctl dim">
        <svg viewBox="0 0 10 10"><path d="M0 5.500h10" stroke="#999"/></svg>
        <svg viewBox="0 0 10 10"><path d="M.5 2.500h7v7h-7zM2.500 2.500v-2h7v7h-2" fill="none" stroke="#999"/></svg>
        <svg viewBox="0 0 10 10"><path d="M.5.500l9 9M9.500.5l-9 9" stroke="#999"/></svg>
      </div>
    </div>
    <div class="toolbar">
      <span class="tb"><svg viewBox="0 0 16 16"><path d="M15 8H2.500M8 2 2 8l6 6" fill="none" stroke="#ddd" stroke-width="1.800"/></svg></span>
      <span class="tb"><svg viewBox="0 0 16 16"><path d="M1 8h12.500M8 2l6 6-6 6" fill="none" stroke="#777" stroke-width="1.800"/></svg></span>
      <span class="tb"><svg><use href="#i-reload"/></svg></span>
      <div class="omni">
        <span class="site"><svg viewBox="0 0 16 16"><circle cx="4" cy="4" r="2" fill="none" stroke="#ddd" stroke-width="1.600"/><circle cx="12" cy="12" r="2" fill="none" stroke="#ddd" stroke-width="1.600"/><path d="M8 4h7M1 12h7" stroke="#ddd" stroke-width="1.700"/></svg></span>
        <span class="url"><b>cloud.uipath.com</b>/tudorzrwrfmb/DefaultTenant/orchestrator_/queues/1029546/transactions(sidepanel:sidepanel/transactions/541910971/details)?tid=1453580&amp;fid=6238410&amp;index=0&amp;size=20&amp;state=M4ewTgLgPgZglgUwDYBMpzSuYEG...</span>
        <svg class="star" viewBox="0 0 16 16"><path d="M8 1l2 4.800 5.200.4-4 3.400 1.300 5L8 11.900l-4.500 2.700 1.300-5-4-3.400 5.200-.4z" fill="none" stroke="#ccc" stroke-width="1.300"/></svg>
      </div>
      <span class="tb"><svg viewBox="0 0 16 16"><path d="M5 0h6l5 5v6l-5 5H5l-5-5V5z" fill="#e0131b"/><path d="M5 8V5M7 8V3.500M9 8V3.500M11 9V5M5 8c0 4 1 5 3.500 5S12 10 12.500 8" stroke="#fff" stroke-width="1.700" fill="#fff"/></svg></span>
      <span class="tb tp">Tp</span>
      <span class="tb"><svg viewBox="0 0 16 16"><path d="M8 0c1 3 5 4 6 8 1 5-2 8-6 8s-7-3-6-8c.5-2 2-2 2-4 1 0 2 1 2 2 1-1 2-3 2-6z" fill="#f2703a"/><circle cx="8" cy="10.500" r="5" fill="#ff8d7a"/><path d="M5 9l2 1M11 9l-2 1M5.500 12c1 2 4 2 5 0" stroke="#6a2bd0" stroke-width="1.500" fill="none"/></svg></span>
      <span class="tb"><svg viewBox="0 0 16 16"><path d="M2 3h3.500c0-3 5-3 5 0H14v4c2.500 0 2.500 4 0 4v4H2v-4c2.500 0 2.500-4 0-4z" fill="none" stroke="#fff" stroke-width="1.700"/></svg></span>
      <i class="vsep"></i>
      <span class="tb prof"><svg><use href="#t-shield"/></svg></span>
      <span class="tb"><svg viewBox="0 0 16 16"><circle cx="8" cy="2.500" r="1.500" fill="#ddd"/><circle cx="8" cy="8" r="1.500" fill="#ddd"/><circle cx="8" cy="13.500" r="1.500" fill="#ddd"/></svg></span>
    </div>
    <div class="bookmarks">
      <span class="bm"><svg viewBox="0 0 16 16"><path d="M1.500 1.500h4.500v4.500H1.500zM10 1.500h4.500v4.500H10zM1.500 10h4.500v4.500H1.500zM10 10h4.500v4.500H10z" fill="none" stroke="#ddd" stroke-width="1.600"/></svg></span>
      <i class="vsep"></i>
      <span class="bm"><svg viewBox="0 0 16 16"><circle cx="8" cy="8" r="8" fill="#0866ff"/><path d="M7 16V10H5V7.500h2V6c0-2 1-3 3-3h1.300v2.200H10c-.7 0-1 .3-1 1v1.300h2.300L11 10H9v6z" fill="#fff"/></svg>Facebook</span>
      <span class="bm"><svg viewBox="0 0 16 16"><path d="M8 1c4.500 0 7.500 3 7.500 7S12.500 14.500 8 14.500L3 16v-2.500C1.500 12 .5 10.500.5 8 .5 4 3.500 1 8 1z" fill="url(#g-msg)"/><path d="M3.500 10 6.500 6.500l2.500 2L12.500 6" fill="none" stroke="#fff" stroke-width="1.700"/></svg>Messenger</span>
      <span class="bm"><svg><use href="#i-yt"/></svg>YouTube</span>
      <span class="bm"><svg viewBox="0 0 16 16"><rect width="16" height="16" rx="4" fill="url(#g-ig)"/><rect x="3" y="3" width="10" height="10" rx="3" fill="none" stroke="#fff" stroke-width="1.300"/><circle cx="8" cy="8" r="2.400" fill="none" stroke="#fff" stroke-width="1.300"/></svg>Instagram</span>
      <span class="bm"><svg><use href="#i-gmail"/></svg>Gmail</span>
      <span class="bm"><svg viewBox="0 0 16 16"><path d="M0 1h16v14H0z" fill="#fbbc04"/><path d="M2 3h12v10H2z" fill="#2a9d58"/><circle cx="8" cy="6.500" r="1.700" fill="#fff"/><path d="M4.500 11.500c0-3.500 7-3.500 7 0z" fill="#fff"/></svg>Cursuri</span>
      <span class="bm"><svg viewBox="0 0 16 16"><path d="M8 5.700 10.300 8 8 10.300 5.700 8zM1.800 6.200 3.600 8 1.800 9.800 0 8zM14.200 6.200 16 8l-1.800 1.800L12.400 8zM8 0l4.800 4.800L11 6.500l-3-3-3 3-1.800-1.700zM8 16l-4.800-4.800L5 9.500l3 3 3-3 1.800 1.700z" fill="#f0b90b"/></svg>Buy/Sell Bitcoin, Eth...</span>
      <span class="bm"><svg viewBox="0 0 16 16"><path d="M0 16l1.200-4A8 8 0 1 1 4 14.800z" fill="#fff"/><circle cx="8" cy="8" r="6.600" fill="#25d366"/><path d="M5 4.500c-1 1 0 3 1.500 4.500S10 11.500 11 10.500l-1.700-1.700-1 .8C7.500 9.200 6.800 8.500 6.400 7.700l.8-1z" fill="#fff"/></svg>WhatsApp</span>
      <span class="bm"><svg><use href="#i-gmail"/></svg>Gmail</span>
      <span class="bm"><svg><use href="#i-yt"/></svg>YouTube</span>
      <span class="bm"><svg><use href="#i-github"/></svg>Tudorr02 (Ilie Octav...</span>
      <span class="bm"><svg viewBox="0 0 16 16"><rect width="16" height="16" rx="4" fill="#0a0a0a"/><circle cx="8" cy="8" r="5" fill="none" stroke="#ddd"/><path d="M5 4v5l6 3M11 4 5 7.500M8 3l4 3v5M4 6v5l4 2 3-2" fill="none" stroke="#ddd" stroke-width=".8"/></svg>ChatGPT</span>
      <i class="vsep"></i>
      <span class="bm all"><svg viewBox="0 0 16 16"><path d="M1 3h5l1.500 2H15v9H1z" fill="none" stroke="#ccc" stroke-width="1.200"/></svg>All Bookmarks</span>
    </div>

    <header class="orc-head">
      <svg class="waffle" viewBox="0 0 16 16"><path d="M0 2.200h16M0 8h16M0 13.800h16" stroke="#cfd8dd" stroke-width="4.200" stroke-dasharray="4.200 1.700"/></svg>
      <span class="logo-ui">Ui</span><span class="logo-path">Path</span><span class="logo-name">Orchestrator</span><i class="hsep"></i>
      <div class="head-icons">
        <span><svg><use href="#i-search"/></svg></span>
        <span><svg viewBox="0 0 18 18"><path d="M1 1h16v16H1zM9 5v8M5 9h8" fill="none" stroke="currentColor" stroke-width="1.800"/></svg></span>
        <span><svg viewBox="0 0 18 20"><path d="M2 1h9l5 5v13H2zM5 10h8M5 14h8" fill="none" stroke="currentColor" stroke-width="1.800"/></svg></span>
        <span class="store"><svg viewBox="0 0 18 18"><path d="M0 1h18M1 4.500h16M2 4v13h3M16 4v13h-3" fill="none" stroke="currentColor" stroke-width="1.800"/><circle cx="9" cy="11.500" r="2.600" fill="none" stroke="currentColor" stroke-width="1.800"/><path d="M9 7v2M9 14v2M5 9.200l1.800 1M13 9.200l-1.800 1M5 13.800l1.800-1M13 13.800l-1.800-1" stroke="currentColor" stroke-width="1.500"/></svg></span>
        <i class="hsep"></i>
        <span class="help"><svg viewBox="0 0 20 20"><circle cx="10" cy="10" r="9" fill="none" stroke="currentColor" stroke-width="1.800"/><path d="M7 8c0-4 6-4 6-.5 0 2-3 2-3 4.500M10 13.500v2" fill="none" stroke="currentColor" stroke-width="1.800"/></svg></span>
        <span class="notif"><svg viewBox="0 0 18 20"><path d="M3 15V9a6 6 0 0 1 12 0v6M.5 16h17" fill="none" stroke="currentColor" stroke-width="1.800"/><path d="M7 18h4l-2 2z" fill="currentColor"/></svg><small>2</small></span>
        <span class="avatar">IL</span>
      </div>
    </header>

    <div class="orc-body">
      <aside class="side">
        <div class="side-row tenant"><svg viewBox="0 0 16 16"><circle cx="8" cy="8" r="7.500" fill="#cfd8dd"/><path d="M3 4l4-2 1 3-2 2 1 2-2 1-3-3zM9 13l1-4 3-1 1 1-3 5z" fill="#182027"/></svg><b>Tenant</b></div>
        <div class="side-row myf"><svg><use href="#i-folder"/></svg><b>My Folders</b></div>
        <div class="side-search"><svg><use href="#i-search"/></svg>Search</div>
        <div class="side-row ws"><svg viewBox="0 0 16 16"><path d="M1 2.500h5l2 2h7v9H1z" fill="none" stroke="#5fb83a" stroke-width="1.500"/><path d="M10 6.500l1 2 2 .2-1.500 1.400.5 2-2-1-2 1 .5-2L7 8.700l2-.2z" fill="#5fb83a"/></svg>My Workspace</div>
        <div class="side-row cur"><svg><use href="#i-folder"/></svg>RPA</div>
        <div class="side-row"><svg><use href="#i-folder"/></svg>Shared</div>
      </aside>
      <main class="trans">
        <div class="crumbs"><b>RPA</b><svg><use href="#i-chev-r"/></svg><b>Queues</b><svg><use href="#i-chev-r"/></svg><strong>Transactions: InvoiceExtractor_Queue</strong><svg class="close"><use href="#i-x"/></svg></div>
        <div class="tools">
          <div class="tsearch"><svg><use href="#i-search"/></svg>Search</div>
          <svg class="cols" viewBox="0 0 16 16"><path d="M1 1h14v14H1zM1 5h14M6 5v10M10.500 5v10" fill="none" stroke="currentColor" stroke-width="1.800"/><path d="M1 1h14v3H1z" fill="currentColor" opacity=".5"/></svg>
          <svg class="cv"><use href="#i-chev-d"/></svg><i class="hsep"></i>
          <svg class="filt" viewBox="0 0 16 12"><path d="M0 1h16M3 6h10M6 11h4" stroke="currentColor" stroke-width="2"/></svg>
          <svg class="cv"><use href="#i-chev-d"/></svg>
          <span class="export"><svg viewBox="0 0 12 12"><path d="M0 11.200h12" stroke="currentColor" stroke-width="1.600"/><path d="M6 0v5" stroke="currentColor" stroke-width="2.200"/><path d="M1.500 4h9L6 9z" fill="currentColor"/></svg>Export</span>
        </div>
        <div class="selcount">0 rows selected</div>
        <div class="grid">
          <div class="gr gh"><i></i><span>Reference</span><span>Status</span><span>Revision</span><span>Priority</span><svg><use href="#i-reload"/></svg></div>
          <div class="gr hot"><i></i><span>Black and White Simple Invoice-4.pdf_20250107183908</span><span>New</span><span>None</span><span>Normal</span><svg class="info" viewBox="0 0 14 14"><circle cx="7" cy="7" r="6.200" fill="none" stroke="currentColor" stroke-width="1.200"/><path d="M7 6v4.500M7 3.500v1.300" stroke="currentColor" stroke-width="1.400"/></svg><svg class="more" viewBox="0 0 14 14"><path d="M7 1.500v12" stroke="currentColor" stroke-width="3" stroke-dasharray="2.500 2"/></svg></div>
          <div class="gr"><i></i><span>Black and White Simple Invoice-8.pdf_20250107183435</span><span>New</span><span>None</span><span>Normal</span></div>
          <div class="gr"><i></i><span>Black and White Simple Invoice-6.pdf_20250107183309</span><span>New</span><span>None</span><span>Normal</span></div>
          <div class="gr"><i></i><span>Black and White Simple Invoice-2.pdf_20250107181217</span><span>Successful</span><span>None</span><span>Normal</span></div>
          <div class="gr"><i></i><span>Black and White Simple Invoice-1.pdf_20250107140235</span><span>Deleted</span><span>None</span><span>Normal</span></div>
          <div class="gr"><i></i><span>Black and White Simple Invoice-1.pdf_20250107140235</span><span>Deleted</span><span>None</span><span>Normal</span></div>
          <div class="gr"><i></i><span>Black and White Simple Invoice-1.pdf_20250107140235</span><span>In Progress</span><span>None</span><span>Normal</span></div>
          <div class="gr"><i></i><span>Black and White Simple Invoice-1.pdf_20250107140235</span><span>Successful</span><span>None</span><span>Normal</span></div>
          <div class="gr"><i></i><span>Black and White Simple Invoice-1.pdf_20250107140235</span><span>Successful</span><span>None</span><span>Normal</span></div>
          <div class="gr"><i></i><span>Black and White Simple Invoice-1.pdf_20250107140235</span><span>Successful</span><span>None</span><span>Normal</span></div>
          <div class="gr"><i></i><span>Black and White Simple Invoice-1.pdf_20250107140235</span><span>In Progress</span><span>None</span><span>Normal</span></div>
          <div class="gr"><i></i><span>Black and White Simple Invoice-1.pdf_20250107140235</span><span>In Progress</span><span>None</span><span>Normal</span></div>
          <div class="gr"><i></i><span>Black and White Simple Invoice-1.pdf_20250107140235</span><span>In Progress</span><span>None</span><span>Normal</span></div>
          <div class="gr"><i></i><span>Black and White Simple Invoice-1.pdf_20250107140235</span><span>Retried</span><span>None</span><span>Normal</span></div>
          <div class="gr"><i></i><span>Black and White Simple Invoice (3).pdf_20250106215055</span><span>In Progress</span><span>None</span><span>Normal</span></div>
          <div class="gr"><i></i><span>Black and White Simple Invoice (3).pdf_20250106215055</span><span>Successful</span><span>None</span><span>Normal</span></div>
          <div class="gr"><i></i><span>Black and White Simple Invoice (3).pdf_20250106215055</span><span>In Progress</span><span>None</span><span>Normal</span></div>
          <div class="gr"><i></i><span>Black and White Simple Invoice (3).pdf_20250107014759</span><span>In Progress</span><span>None</span><span>Normal</span></div>
          <div class="gr"><i></i><span>Black and White Simple Invoice (4).pdf_20250106215033</span><span>In Progress</span><span>None</span><span>Normal</span></div>
          <div class="gr"><i></i><span>Black and White Simple Invoice (4).pdf_20250106215033</span><span>In Progress</span><span>None</span><span>Normal</span></div>
        </div>
        <div class="hscroll"><i></i></div>
        <div class="pager">
          <span class="range">1 - 20 / 40</span>
          <svg class="off"><use href="#i-first"/></svg><svg class="off"><use href="#i-chev-l"/></svg><span class="pg">Page 1 / 2</span><svg><use href="#i-chev-r"/></svg><svg><use href="#i-last"/></svg>
          <span class="it">Items</span><span class="n">20</span><svg class="dd"><use href="#i-chev-d"/></svg>
        </div>
      </main>
      <aside class="details">
        <div class="d-title"><b>a310c168-7198-41b2-ac6d-0a3fd92fc8d7</b><svg viewBox="0 0 12 12"><path d="M1 4V1h3M8 1h3v3M11 8v3H8M4 11H1V8" fill="none" stroke="currentColor" stroke-width="1.700"/></svg><svg><use href="#i-x"/></svg></div>
        <div class="d-tabs"><span class="on">Details</span><span>Comments</span><span>History</span></div>
        <div class="d-spec"><svg><use href="#i-chev-d"/></svg><b>Specific Data:</b><span>Object</span></div>
        <dl>
          <div class="email"><dt>Email<br>ID:</dt><dd>&lt;DB3PR10MB6905D7F562A4D95BEE903EE8BB112@DB3PR10MB6905.EURPR<br>D10.PROD.OUTLOOK.COM&gt;</dd></div>
          <div><dt>Vendor Name:</dt><dd>HYUNDAI MOBIS</dd></div>
          <div><dt>Invoice Number:</dt><dd>105</dd></div>
          <div><dt>Invoice Date:</dt><dd>07/01/2025</dd></div>
          <div><dt>Due Date:</dt><dd>08/02/2025</dd></div>
          <div><dt>Vendor Adress:</dt><dd>AVENUE, HUSTON, TX</dd></div>
          <div><dt>Billing Address:</dt><dd class="two">DANA INCORPORATED<br>STRADA REBREANU, NR 11</dd></div>
          <div><dt>Shipping Address:</dt><dd>STRADA VALEA LUNGA, NR 35</dd></div>
          <div><dt>Ordered Items:</dt><dd>Carbon filter x 1 ; Engine spark x 3 ; LED Bulb x 1 ;</dd></div>
          <div><dt>Total Amount:</dt><dd>Total: 214.2</dd></div>
          <div><dt>VAT:</dt><dd>34.2</dd></div>
        </dl>
        <div class="d-sec"><b>Output Data:</b><span>Empty</span></div>
        <div class="d-sec last"><b>Analytics Data:</b><span>Empty</span></div>
        <div class="d-rec">Recording: False</div>
        <div class="mini mh"><span>Status</span><span>Revis..</span><span>Dead..</span><span>Retry..</span><span>Post...</span><span>Started</span><svg><use href="#i-sort"/></svg><span>Ended</span><svg><use href="#i-sort"/></svg><span>Ro...</span><svg><use href="#i-sort"/></svg><span>Exce...</span><svg class="rl"><use href="#i-reload"/></svg></div>
        <div class="mini mr"><span>New</span><span>No...</span><span></span><span>0</span></div>
        <div class="d-pager"><svg><use href="#i-first"/></svg><svg><use href="#i-chev-l"/></svg><span>Page 1</span><svg><use href="#i-chev-r"/></svg><svg><use href="#i-last"/></svg></div>
        <div class="d-foot"><span>1 - 20 / 0</span><span class="it">Items</span><span class="n">20</span><svg><use href="#i-chev-d"/></svg></div>
      </aside>
    </div>

    <footer class="taskbar">
      <svg class="start"><use href="#t-win"/></svg>
      <div class="pill"><svg><use href="#i-search"/></svg><span>Search</span><svg class="desk"><use href="#t-desk"/></svg></div>
      <div class="apps">
        <span><svg><use href="#t-copilot"/></svg></span><span><svg><use href="#t-mon"/></svg></span><span><svg><use href="#t-files"/></svg></span>
        <span class="run"><svg><use href="#t-chrome"/></svg><svg class="badge-svg"><use href="#t-shield"/></svg></span>
        <span><svg><use href="#t-clion"/></svg><em>CL</em></span><span><svg><use href="#t-steam"/></svg></span>
        <span class="run"><svg><use href="#t-discord"/></svg><small class="red">9+</small></span>
        <span><svg><use href="#t-code"/></svg></span><span><svg><use href="#t-teams"/></svg></span><span><svg><use href="#t-idea"/></svg><em>IJ</em></span><span><svg><use href="#t-r"/></svg><em class="serif">R</em></span><span><svg><use href="#t-edge"/></svg></span><span><svg><use href="#t-brave"/></svg></span><span><svg><use href="#t-spotify"/></svg></span><span><svg><use href="#t-red"/></svg></span><span><svg><use href="#t-ard"/></svg></span><span><svg><use href="#t-pycharm"/></svg><em>PC</em></span><span><svg><use href="#t-mine"/></svg></span><span><svg><use href="#t-vs"/></svg></span>
        <span><svg><use href="#i-wa"/></svg><small class="cyan">26</small></span>
        <span class="run"><svg><use href="#t-uipath"/></svg></span>
        <span class="run"><svg><use href="#t-green"/></svg></span>
        <span class="run alert"><svg><use href="#t-outlook"/></svg><svg class="badge-svg tri"><use href="#i-warn"/></svg></span>
      </div>
      <div class="clock"><span>18:40</span><span>07.01.2025</span></div>
    </footer>
  </section>
</div>
</body>
</html>
```
FILE: styles.css
```css
* { box-sizing: border-box; margin: 0; padding: 0; }
html, body { background: #000; overflow: hidden; }
body { font-family: "Open Sans", "Liberation Sans", sans-serif; text-rendering: geometricPrecision; white-space: nowrap; }
.sprite { position: absolute; width: 0; height: 0; }
svg { display: block; flex: none; }
i, em { font-style: normal; }
.desktop { zoom: 0.9142857; display: flex; width: 4480px; height: 1440px; overflow: hidden; }
.monitor { display: flex; flex-direction: column; height: 1440px; flex: none; }
.left { width: 2560px; position: relative; color: #f0f0f0; }
.right { width: 1920px; padding-top: 206px; background: #000; }

/* Outlook title bar and ribbon tabs */
.ol-title { height: 34px; background: #0a0a0a; display: flex; align-items: center; padding-left: 21px; }
.sync { width: 16px; height: 16px; }
.undo { width: 15px; height: 16px; margin-left: 14px; }
.qat { width: 8px; height: 8px; margin-left: 17px; }
.ol-search { margin-left: 142px; width: 303px; height: 26px; margin-top: -2px; background: #262626; display: flex; align-items: center; padding-left: 19px; font-size: 12px; letter-spacing: -.1px; color: #b4b4b4; }
.ol-search svg { width: 15px; height: 15px; margin-right: 13px; margin-top: -2px; }
.ol-search span { padding-top: 1px; }
.win-ctl { display: flex; gap: 35px; margin-left: auto; padding-right: 19px; }
.win-ctl svg { width: 10px; height: 10px; }
.ol-tabs { height: 31px; background: #333230; display: grid; grid-template-columns: 52px 64px 114px 55px 60px; padding-left: 17px; font-size: 12.600px; line-height: 32px; }

.ol-body { height: 1305px; background: #262626; display: flex; }
.folders { width: 231px; display: flex; flex-direction: column; font-size: 11.900px; letter-spacing: -.22px; }
.new-mail { height: 44px; display: flex; align-items: center; padding: 0 11px 0 24px; font-size: 14.600px; letter-spacing: -.1px; }
.new-mail span { padding-top: 2px; }
.new-mail svg { width: 19px; height: 17px; margin-right: 8px; margin-top: 2px; }
.new-mail .collapse { width: 9px; height: 9px; margin: -24px 0 0 auto; }
.row { height: 24px; line-height: 24px; display: flex; align-items: center; padding-right: 17px; padding-left: 10px; }
.row svg, .row i { width: 11px; height: 11px; margin-right: 1px; flex: none; }
.row svg { margin-top: 1px; }
.row span, .row b, .row em { padding-top: 2px; }
.row b, .row em { margin-left: auto; color: #55aef5; font-size: 12px; }
.row b { font-weight: 700; }
.row.acct { font-size: 14.500px; letter-spacing: -.1px; color: #dcdcdc; }
.row.fav { height: 40px; }
.row.sub { padding-left: 19px; }
.rule { height: 1px; background: #4b4b4b; margin: 2px 5px 13px 6px; flex: none; }
.groups { margin-top: 10px; }
.second { margin-top: 40px; }
.modules { margin-top: auto; height: 47px; border-top: 1px solid #464646; display: grid; grid-template-columns: repeat(5, 46px); justify-items: center; align-items: center; }
.modules svg { width: 19px; height: 19px; }

.list-pane { width: 306px; margin-top: 8px; border-left: 1px solid #3f3f3f; display: flex; flex-direction: column; }
.list-head { height: 35px; display: flex; align-items: center; padding-left: 26px; font-size: 14px; }
.list-head span { width: 72px; line-height: 34px; height: 35px; padding-top: 3px; }
.list-head .on { color: #4fa9f0; width: 56px; margin-right: 16px; border-bottom: 2px solid #4fa9f0; }
.list-head small { font-size: 12px; letter-spacing: -.2px; width: 46px; margin-left: 20px; padding-top: 8px; }
.list-head svg { width: 10px; height: 10px; margin-top: 5px; }
.list-head .arrow { width: 9px; height: 12px; margin-left: 15px; margin-top: 4px; }
.list-wrap { display: flex; height: 1262px; overflow: hidden; }
.mails { width: 276px; border-top: 1px solid #606060; }
h4 { height: 25px; line-height: 22px; background: #444; border-bottom: 1px solid #606060; font-size: 11.600px; font-weight: 700; display: flex; align-items: center; padding: 2px 0 0 9px; letter-spacing: -.3px; color: #fff; }
h4.first { height: 24px; }
h4 svg { width: 10px; height: 10px; margin-right: 9px; }
article { height: 72px; border-bottom: 1px solid #606060; padding: 11px 25px 0 28px; background: linear-gradient(#4fb0ff, #4fb0ff) left / 4px 100% no-repeat; }
article.sel { background-color: #444; outline: 1px dotted #bbb; outline-offset: -1px; }
article.cut { height: 58px; border: 0; }
h5 { font-weight: 400; font-size: 14.800px; line-height: 20px; color: #fff; display: flex; justify-content: space-between; letter-spacing: -.28px; }
.flags { width: 36px; height: 18px; margin-right: -1px; }
article div { display: flex; justify-content: space-between; font-weight: 600; font-size: 11.400px; line-height: 15px; color: #4fadf7; letter-spacing: -.1px; }
article p { font-size: 11.400px; line-height: 15px; color: #a8a8a8; }
article p.us { color: #ccc; font-size: 11.300px; letter-spacing: -.02px; }
.scroll { width: 15px; height: 1257px; margin: 2px 0 0 8px; background: #333; padding: 1px; display: flex; flex-direction: column; }
.scroll i { height: 13px; background: #4f4f4f; flex: none; display: grid; place-items: center; }
.scroll i::after { content: ""; border: 4px solid transparent; border-top: 0; border-bottom-color: #a0a0a0; }
.scroll .down::after { transform: rotate(180deg); }
.scroll .down { margin-top: auto; }
.scroll b { height: 135px; margin-top: 2px; background: #4f4f4f; }

.reading { flex: 1; margin-top: 8px; border-left: 1px solid #464646; display: flex; flex-direction: column; align-items: center; padding: 589px 0 0 3px; }
.reading svg { width: 44px; height: 31px; }
.reading strong { font-weight: 400; font-size: 16.500px; line-height: 24px; margin-top: 13px; }
.reading a { font-size: 11.500px; line-height: 18px; color: #2a9fe0; margin-top: 5px; }

.ol-status { height: 23px; background: #333230; border-top: 1px solid #424140; border-bottom: 1px solid #424140; display: flex; align-items: center; padding-left: 8px; font-size: 11.600px; letter-spacing: -.1px; line-height: 22px; }
.st-items { width: 76px; }
.st-upd { margin-left: auto; width: 211px; }
.st-warn { width: 14px; height: 14px; color: #bbb; margin-right: 3px; }
.st-disc { width: 89px; }
.view { width: 40px; height: 21px; display: grid; place-items: center; }
.view.on { background: #666; }
.view svg { width: 14px; height: 13px; }
.zoomer { width: 130px; height: 14px; margin-left: 5px; }
.pct { width: 42px; padding-left: 10px; color: #6c6b69; }

/* Windows taskbar */
.taskbar { height: 47px; background: #1c1c1c; display: flex; align-items: center; padding-left: 650px; color: #fff; flex: none; }
.start { width: 23px; height: 23px; }
.pill { width: 220px; height: 32px; margin: 0 2px 0 14px; border-radius: 16px; background: #3c3c3c; border: 1px solid #4a4a4a; border-top-color: #5a5a5a; display: flex; align-items: center; padding: 0 5px 0 11px; font-size: 13.300px; color: #ccc; }
.pill svg { width: 15px; height: 15px; margin-right: 10px; }
.pill .desk { width: 46px; height: 26px; margin: 0 0 0 auto; }
.apps { display: flex; }
.apps span { width: 40px; height: 40px; margin: 0 2px; position: relative; display: grid; place-items: center; border-radius: 4px; }
.apps svg { width: 24px; height: 24px; }
.apps em { position: absolute; left: 13px; top: 13px; font: bold 8px/8px "Liberation Mono", monospace; color: #fff; }
.apps em.serif { left: 8px; top: 10px; width: 24px; text-align: center; font: 17px/20px "Liberation Serif", serif; }
.apps .run::after { content: ""; position: absolute; left: 17px; top: 36px; width: 6px; height: 3px; border-radius: 2px; background: #9a9a9a; }
.apps .hover { background: #2e2e2e; }
.apps .alert { background: #2a2020; }
.apps .alert::after { width: 11px; left: 15px; background: #ff99a4; }
.apps .badge-svg { position: absolute; width: 16px; height: 16px; left: 21px; top: 3px; }
.apps .tri { color: #f0b060; }
.apps small { position: absolute; left: 22px; top: 3px; width: 14px; height: 14px; border-radius: 50%; background: #e8474c; font-size: 10px; line-height: 13px; text-align: center; letter-spacing: -.5px; }
.apps small.cyan { background: #1fe9f5; color: #10222a; width: 20px; height: 16px; border-radius: 8px; left: 19px; top: 2px; font-size: 11px; line-height: 16px; }
.tray { margin-left: auto; display: flex; align-items: center; }
.tray svg { width: 12px; height: 12px; margin-right: 20px; }
.tray .mic { height: 17px; }
.tray .wifi { width: 17px; height: 13px; margin-right: 6px; }
.tray .spk { width: 18px; height: 14px; margin-right: 10px; }
.clock { display: flex; flex-direction: column; align-items: flex-end; width: 62px; font-size: 11.300px; line-height: 16px; }
.left .bell { width: 14px; height: 16px; margin: 0 21px 0 8px; }

/* Taskbar window preview */
.preview { position: absolute; left: 1702px; top: 1188px; width: 216px; height: 193px; border-radius: 8px; background: #333; padding: 8px 8px 0; display: flex; flex-direction: column; align-items: center; }
.pv-title { width: 200px; height: 22px; display: flex; align-items: center; gap: 8px; font-size: 11.400px; letter-spacing: -.1px; }
.pv-title svg { width: 16px; height: 16px; }
.thumb { width: 200px; height: 109px; margin-top: 8px; }
.pv-box { width: 26px; height: 27px; margin-top: 8px; border: 1px solid #222; background: #0c8ef0; background-clip: content-box; padding: 4px; }

/* Chrome */
.strip { height: 34px; display: flex; align-items: center; padding-left: 6px; flex: none; }
.tabsearch { width: 28px; height: 28px; margin: -6px 6px 0 0; border-radius: 9px; background: #2d2d2d; display: grid; place-items: center; color: #ddd; }
.tabsearch svg { width: 9px; height: 9px; }
.tab { width: 238px; height: 34px; display: flex; align-items: center; padding: 0 0 6px 8px; font-size: 11.600px; color: #b4b4b4; position: relative; }
.tab svg { width: 16px; height: 16px; margin-right: 8px; }
.tab span { width: 171px; margin-right: 8px; padding-top: 1px; overflow: hidden; -webkit-mask: linear-gradient(90deg, #000 87%, transparent); mask: linear-gradient(90deg, #000 87%, transparent); }
.tab svg.x { width: 10px; height: 10px; margin: 0 13px 0 0; color: #ccc; }
.tab i { width: 1px; height: 16px; background: #555; }
.tab.active { color: #e4e4e4; width: 232px; margin-right: 6px; background: #353535; border-radius: 8px 8px 0 0; }
.tab.active::before, .tab.active::after { content: ""; position: absolute; bottom: 0; width: 8px; height: 8px; }
.tab.active::before { left: -8px; background: radial-gradient(circle at 0 0, transparent 8px, #353535 8.500px); }
.tab.active::after { right: -8px; background: radial-gradient(circle at 100% 0, transparent 8px, #353535 8.500px); }
.plus { width: 11px; height: 11px; margin: -6px 0 0 9px; }
.right .win-ctl { padding-right: 18px; gap: 36px; margin-top: -6px; }
.toolbar { height: 46px; flex: none; background: #353535; border-radius: 8px 8px 0 0; display: flex; align-items: center; padding-left: 4px; color: #ddd; }
.tb { width: 36px; display: grid; place-items: center; }
.tb svg { width: 14px; height: 14px; }
.prof svg { width: 20px; height: 20px; }
.tp { color: #f0484c; font-weight: 700; font-size: 14px; letter-spacing: -1px; }
.omni { width: 1552px; height: 34px; border-radius: 17px; margin: 0 9px; background: #202124; display: flex; align-items: center; padding-left: 4px; }
.site { width: 24px; height: 24px; border-radius: 50%; background: #353535; display: grid; place-items: center; margin-right: 8px; }
.site svg { width: 12px; height: 12px; }
.url { width: 1474px; font-size: 13.400px; color: #9a9a9a; }
.url b { font-weight: 400; color: #f4f4f4; letter-spacing: -.1px; }
.star { width: 15px; height: 15px; margin-left: 11px; }
.vsep { width: 2px; height: 16px; background: #111; margin: 0 8px; }
.bookmarks { height: 35px; flex: none; background: #353535; border-bottom: 1px solid #5c5c5c; display: grid; grid-template-columns: 30px 16px 89px 96px 84px 91px 69px 76px 153px 95px 69px 84px 154px 665px 17px 120px; padding: 0 0 5px 18px; align-items: center; font-size: 11.500px; color: #f0f0f0; }
.bookmarks .vsep { margin: 0; }
.bm { display: flex; align-items: center; gap: 6px; }
.bm svg { width: 16px; height: 16px; }
.bm:first-child svg { width: 15px; height: 15px; }
.bm.all { gap: 8px; letter-spacing: -.15px; }

/* Orchestrator */
.orc-head { height: 48px; flex: none; background: #182027; border-bottom: 1px solid #526069; display: flex; align-items: center; padding: 2px 26px 0; color: #cfd8dd; }
.orc-head, .orc-body { font-family: "Noto Sans", "Open Sans", sans-serif; }
.waffle { width: 17px; height: 16px; margin-right: 25px; }
.logo-ui { width: 22px; height: 22px; border: 2px solid #fa4616; color: #fa4616; font: 400 16px/18px Lato, sans-serif; text-align: center; letter-spacing: -.3px; }
.logo-path { color: #fa4616; font: 400 17px/22px Lato, sans-serif; width: 46px; padding-left: 2px; }
.logo-name { width: 119px; color: #fff; font: 600 16px/22px Inter, sans-serif; letter-spacing: -.05px; }
.hsep { width: 1px; height: 24px; background: #526069; }
.head-icons { margin-left: auto; display: flex; align-items: center; }
.head-icons span { width: 40px; display: grid; place-items: center; position: relative; }
.head-icons svg { width: 19px; height: 19px; }
.head-icons .store { width: 32px; }
.head-icons .hsep { margin: 0 9px 0 13px; }
.head-icons .help, .head-icons .notif { width: 36px; }
.head-icons .help svg { width: 21px; height: 21px; }
.head-icons small { position: absolute; left: 18px; top: -13px; width: 20px; height: 20px; border-radius: 50%; background: #fff; color: #182027; font-weight: 600; font-size: 12px; line-height: 20px; text-align: center; }
.head-icons .avatar { width: 30px; height: 30px; margin-left: 20px; border-radius: 50%; background: #3498db; color: #d8ecfa; font-size: 10px; }

.orc-body { height: 863px; flex: none; background: #182027; display: flex; color: #e8ecef; font-size: 14px; }
.side { width: 220px; border-right: 1px solid #526069; }
.side b, .crumbs b { font-weight: 600; }
.side-row { height: 32px; display: flex; align-items: center; padding-left: 25px; color: #e3e7ea; }
.side-row svg { width: 16px; height: 16px; margin-right: 6px; color: #cfd8dd; }
.tenant { height: 41px; margin: 0 10px; padding-left: 15px; border-bottom: 1px solid #526069; }
.myf { height: 48px; }
.myf svg { margin-right: 9px; }
.side-search { margin: -1px 0 16px 24px; width: 172px; height: 32px; border: 1px solid #cfd8dd; border-radius: 3px; display: flex; align-items: center; padding-left: 7px; color: #8e9aa2; }
.side-search svg { width: 15px; height: 15px; margin-right: 5px; color: #cfd8dd; }
.cur { background: #3a4753; border-left: 4px solid #66adff; padding-left: 21px; }

.trans { width: 1057px; padding: 0 32px; border-right: 1px solid #526069; }
.crumbs { height: 41px; display: grid; grid-template-columns: 52px 34px 74px 35px 1fr 20px; align-items: center; padding-left: 2px; border-bottom: 1px solid #526069; color: #cfd8dd; }
.crumbs svg { width: 12px; height: 12px; }
.crumbs strong { font-weight: 600; color: #fff; }
.tools { display: flex; align-items: center; height: 32px; margin-top: 8px; }
.tsearch { width: 240px; height: 32px; border: 1px solid #cfd8dd; border-radius: 3px; display: flex; align-items: center; padding-left: 9px; color: #8e9aa2; }
.tsearch svg { width: 14px; height: 14px; margin-right: 12px; color: #cfd8dd; }
.cols { width: 16px; height: 14px; margin-left: 18px; }
.cv { width: 11px; height: 11px; margin-left: 12px; }
.tools .hsep { margin: 0 19px 0 22px; }
.filt { width: 16px; height: 10px; }
.filt + .cv { margin-left: 13px; }
.export { margin-left: auto; width: 96px; height: 32px; border-radius: 3px; background: #66adff; color: #182027; font-weight: 600; font-size: 13.500px; display: flex; align-items: center; padding-left: 14px; }
.export svg { width: 11px; height: 12px; margin-right: 11px; }
.selcount { font-size: 16px; line-height: 24px; margin-top: 16px; padding-left: 10px; height: 34px; }
.grid { position: relative; }
.grid::after { content: ""; position: absolute; right: 0; top: 41px; bottom: 0; width: 26px; background: linear-gradient(90deg, transparent, rgba(14, 18, 22, .75)); }
.gr { height: 32px; border-bottom: 1px solid #4c5963; display: grid; grid-template-columns: 38px 458px 169px 164px 86px 32px 32px; align-items: center; padding-left: 17px; font-weight: 600; font-size: 13.800px; }
.gr i { width: 16px; height: 16px; border: 2px solid #b9c3ca; border-radius: 2px; }
.gr span:nth-of-type(2) { border-left: 1px solid #4c5963; height: 31px; line-height: 31px; padding-left: 5px; }
.gr svg { width: 14px; height: 14px; color: #e8ecef; }
.gh { height: 40px; background: #273139; margin-bottom: 1px; }
.gh span:nth-of-type(2) { height: 39px; line-height: 39px; }
.gh svg { margin-left: 29px; }
.hot { background: #262f38; box-shadow: inset 4px 0 #66adff; }
.gr .info { margin-left: 7px; }
.gr .more { margin-left: 2px; }
.hscroll { height: 9px; background: #232b32; border-bottom: 1px solid #4c5963; }
.hscroll i { display: block; width: 448px; height: 8px; border-radius: 3px; background: #515253; }
.pager { height: 34px; display: grid; grid-template-columns: 347px 28px 59px 122px 28px 262px 58px 29px 20px; align-items: center; padding-left: 16px; color: #cfd8dd; }
.pager svg { width: 11px; height: 11px; }
.off { color: #6a7780; }
.n { color: #fff; font-size: 13px; font-weight: 600; }

.details { flex: 1; padding: 0 20px; color: #e8ecef; }
.d-title { height: 40px; display: flex; align-items: center; font-size: 16px; color: #f2f4f5; }
.d-title b { font-weight: 600; }
.d-title svg { width: 12px; height: 12px; margin-right: 6px; margin-left: 0; }
.d-title b + svg { margin-left: auto; margin-right: 20px; }
.d-tabs { height: 33px; border-bottom: 1px solid #526069; display: flex; font-weight: 600; line-height: 32px; }
.d-tabs span { padding: 0 16px; }
.d-tabs .on { color: #66adff; border-bottom: 4px solid #66adff; width: 79px; padding: 0 15px; }
.d-spec { display: flex; align-items: center; height: 20px; margin: 19px 0 0 6px; }
.d-spec svg { width: 12px; height: 12px; margin-right: 9px; color: #66adff; }
.d-spec b { font-weight: 600; margin-right: 10px; letter-spacing: .05px; }
dl { padding-left: 48px; line-height: 16px; height: 289px; border-bottom: 1px solid #526069; font-size: 13.700px; }
dl div { display: flex; margin-bottom: 4.150px; }
dt { font-weight: 600; font-size: 14px; letter-spacing: .08px; margin-right: 9px; flex: none; color: #f2f4f5; }
.email dt { width: 40px; }
.email dd { padding-top: 16px; letter-spacing: -.22px; }
.two { margin-left: -4px; text-indent: 4px; }
.d-sec { height: 62px; display: flex; align-items: center; border-bottom: 1px solid #526069; color: #8b959c; }
.d-sec.last { border: 0; }
.d-sec b { font-weight: 600; color: #f2f4f5; margin-right: 9px; }
.d-rec { font-size: 16px; line-height: 24px; margin: -4px 0 7px; }
.mini { display: grid; grid-template-columns: 52px 54px 54px 54px 54px 53px 25px 47px 32px 36px 18px 68px 16px; align-items: center; padding-left: 24px; font-size: 13.700px; }
.mh { height: 40px; background: #273139; border-bottom: 1px solid #4c5963; font-weight: 600; }
.mini svg { width: 8px; height: 13px; }
.mini .rl { width: 15px; height: 15px; }
.mr { height: 33px; border-bottom: 1px solid #4c5963; }
.d-pager { height: 30px; display: grid; grid-template-columns: 28px 66px 112px 28px 20px; align-items: center; padding-left: 179px; }
.d-pager svg { width: 11px; height: 11px; color: #7f8b93; }
.d-foot { height: 28px; display: grid; grid-template-columns: 458px 57px 29px 20px; align-items: center; padding-left: 15px; color: #cfd8dd; }
.d-foot svg { width: 12px; height: 12px; }

.right .taskbar { height: 48px; padding-left: 330px; border-top: 1px solid #474747; }
.right .clock { margin: 0 23px 0 auto; }
```
